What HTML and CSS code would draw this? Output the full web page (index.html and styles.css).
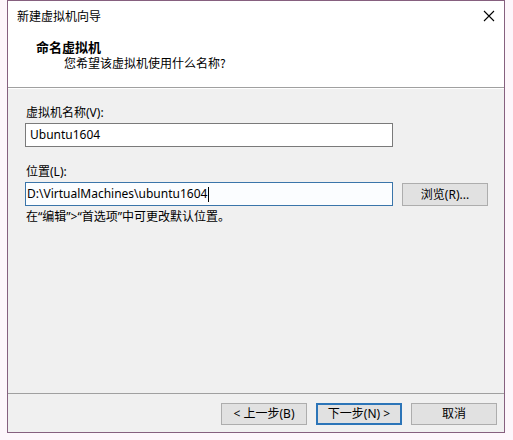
FILE: index.html
```html
<!DOCTYPE html>
<html lang="zh-CN">
<head>
<meta charset="utf-8">
<title>新建虚拟机向导</title>
<link rel="stylesheet" href="styles.css">
</head>
<body>
<div class="window">
  <div class="header">
    <div class="titlebar">
      <span class="title">新建虚拟机向导</span>
      <span class="close" aria-label="关闭">
        <svg width="12" height="12" viewBox="0 0 12 12"><path d="M1 1 L11 11 M11 1 L1 11" stroke="#000" stroke-width="1.1" fill="none"/></svg>
      </span>
    </div>
    <div class="heading">命名虚拟机</div>
    <div class="subheading">您希望该虚拟机使用什么名称?</div>
  </div>
  <div class="content">
    <div class="label">虚拟机名称(V):</div>
    <div class="input">Ubuntu1604</div>
    <div class="label label-2">位置(L):</div>
    <div class="row">
      <div class="input input-focus">D:\VirtualMachines\ubuntu1604<span class="caret"></span></div>
      <div class="btn btn-browse">浏览(R)...</div>
    </div>
    <div class="hint">在“编辑”&gt;“首选项”中可更改默认位置。</div>
  </div>
  <div class="footer">
    <div class="btn">&lt; 上一步(B)</div>
    <div class="btn btn-default">下一步(N) &gt;</div>
    <div class="btn">取消</div>
  </div>
</div>
</body>
</html>
```
FILE: styles.css
```css
html, body {
  margin: 0;
  padding: 0;
}
body {
  width: 513px;
  height: 440px;
  background: #fdf6fb;
  font-family: "Segoe UI", "Noto Sans", "Noto Sans CJK SC", sans-serif;
  font-size: 12px;
  color: #000;
  overflow: hidden;
}
.window {
  box-sizing: border-box;
  margin-left: 7px;
  width: 498px;
  height: 433px;
  border: 1px solid #86607f;
  background: #f0f0f0;
  display: flex;
  flex-direction: column;
}
.header {
  background: #fff;
  height: 86px;
  border-bottom: 1px solid #a0a0a0;
  flex: none;
}
.titlebar {
  height: 29px;
  display: flex;
  align-items: center;
  justify-content: space-between;
  padding-left: 9px;
  padding-right: 9px;
}
.title {
  font-family: "Noto Sans CJK SC", sans-serif;
  line-height: 16px;
}
.close {
  display: flex;
  width: 12px;
  height: 12px;
}
.heading {
  margin-top: 9px;
  padding-left: 28px;
  font-weight: bold;
  font-size: 13px;
  line-height: 16px;
  font-family: "Noto Sans CJK SC", sans-serif;
}
.subheading {
  padding-left: 56px;
  line-height: 16px;
  font-family: "Noto Sans CJK SC", sans-serif;
}
.content {
  flex: 1;
  padding: 16px 0 0 17px;
  border-top: 1px solid #fff;
}
.label {
  line-height: 16px;
  padding-left: 1px;
}
.label-2 {
  margin-top: 17px;
}
.input {
  box-sizing: border-box;
  margin-top: 2px;
  width: 368px;
  height: 24px;
  border: 1px solid #7a7a7a;
  background: #fff;
  line-height: 22px;
  padding-left: 4px;
}
.input-focus {
  border-color: #3a75aa;
  background: #fbfdff;
  padding-left: 1px;
  display: flex;
  align-items: center;
}
.caret {
  display: inline-block;
  width: 0;
  height: 15px;
  border-left: 1px solid #000;
  margin-left: 1px;
}
.row {
  display: flex;
  align-items: flex-start;
  gap: 9px;
}
.btn {
  box-sizing: border-box;
  width: 86px;
  height: 22px;
  border: 1px solid #adadad;
  background: #e1e1e1;
  display: flex;
  align-items: center;
  justify-content: center;
  line-height: 16px;
}
.btn-browse {
  margin-top: 3px;
  height: 23px;
}
.btn-default {
  border: 2px solid #2c75b8;
}
.hint {
  margin-top: 3px;
  line-height: 16px;
  padding-left: 1px;
}
.footer {
  flex: none;
  height: 39px;
  box-sizing: border-box;
  border-top: 1px solid #a0a0a0;
  display: flex;
  justify-content: flex-end;
  align-items: flex-start;
  gap: 9px;
  padding: 9px 7px 0 0;
}
```
